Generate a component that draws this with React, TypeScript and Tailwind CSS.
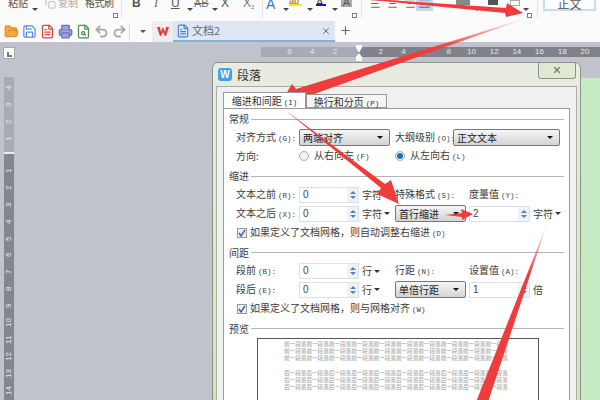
import React from 'react';
import { AlignCenter, AlignJustify, AlignLeft, AlignRight, Copy, FileSearch, FileText, FolderOpen, Plus, Printer, Redo2, Save, Undo2, X } from 'lucide-react';

const Caret = ({ className = 'border-t-[#444]' }: { className?: string }) => (
  <span className={`inline-block w-0 h-0 border-x-[3px] border-x-transparent border-t-[3px] ${className}`} />
);

const Launcher = ({ className = '' }: { className?: string }) => (
  <span className={`w-[5px] h-[5px] border border-[#6d7f99] bg-white shrink-0 mt-[13px] ${className}`} />
);

const Sep = ({ className = '' }: { className?: string }) => <span className={`w-px h-[18px] bg-[#e2e2e2] shrink-0 ${className}`} />;

const latin = "font-['Liberation_Sans',sans-serif]";

const RibbonRow = () => (
  <div className="h-[21px] flex items-start text-[10px] text-[#555] overflow-hidden shrink-0 leading-[12px] whitespace-nowrap">
    <span className="ml-[8px] w-[24px] -mt-[3px] shrink-0">粘贴</span>
    <span className="mt-[1px] shrink-0 w-[13px]"><Caret /></span>
    <Copy size={11} className="text-[#bbb] -mt-[2px] shrink-0" />
    <span className="ml-[2px] w-[27px] -mt-[3px] text-[#aaa] shrink-0">复制</span>
    <span className="w-[28px] -mt-[3px] shrink-0 overflow-visible tracking-[-0.5px]">格式刷</span>
    <Launcher />
    <Sep className="ml-[3px]" />
    <span className={`ml-[10px] w-[22px] -mt-[3px] text-[12px] font-bold text-[#555] shrink-0 ${latin}`}>B</span>
    <span className="w-[17px] -mt-[3px] text-[12px] italic text-[#666] shrink-0 font-['Liberation_Serif',serif]">I</span>
    <span className={`w-[16px] -mt-[3px] text-[12px] underline text-[#555] shrink-0 ${latin}`}>U</span>
    <span className="mt-[1px] w-[7px] shrink-0"><Caret /></span>
    <span className={`w-[18px] -mt-[3px] text-[11px] line-through decoration-[#e33] text-[#777] shrink-0 ${latin}`}>AB</span>
    <span className="mt-[1px] w-[9px] shrink-0"><Caret /></span>
    <span className={`w-[22px] -mt-[3px] text-[12px] text-[#555] shrink-0 ${latin}`}>X</span>
    <span className={`w-[19px] -mt-[3px] text-[12px] text-[#777] shrink-0 ${latin}`}>X<sub className="text-[6px]">2</sub></span>
    <Sep />
    <span className={`ml-[3px] w-[17px] -mt-[2px] text-[14px] text-[#3f74c8] shrink-0 ${latin}`}>A</span>
    <span className="mt-[1px] w-[6px] shrink-0"><Caret /></span>
    <span className="w-[18px] shrink-0"><span className={`block w-[13px] h-[6px] border-b-[2px] border-[#ffee00] text-[9px] text-[#a06000] leading-[3px] ${latin}`}>ab</span></span>
    <span className="mt-[1px] w-[9px] shrink-0"><Caret /></span>
    <span className="w-[16px] shrink-0"><span className={`block w-[10px] h-[6px] border-b-[2px] border-[#1111dd] text-[11px] leading-[4px] text-[#333] ${latin}`}>A</span></span>
    <span className="mt-[1px] w-[9px] shrink-0"><Caret /></span>
    <span className={`w-[11px] h-[7px] bg-[#aaa] text-[11px] leading-[5px] text-center text-[#555] shrink-0 ${latin}`}>A</span>
    <Launcher />
    <Sep className="ml-[4px]" />
    <AlignLeft size={13} className="ml-[8px] mr-[3px] -mt-[3px] text-[#666] shrink-0" />
    <AlignCenter size={13} className="mr-[4px] -mt-[3px] text-[#666] shrink-0" />
    <AlignRight size={13} className="-mt-[3px] text-[#666] shrink-0" />
    <span className="w-[17px] h-[11px] bg-[#c6d6ec] flex justify-center shrink-0"><AlignJustify size={13} className="-mt-[3px] text-[#666]" /></span>
    <span className="ml-[23px] w-[14px] h-[5px] bg-[#888] shrink-0" />
    <span className="ml-[4px] mt-[1px] w-[14px] shrink-0"><Caret /></span>
    <span className="w-[10px] h-[5px] bg-[#555] shrink-0" />
    <span className="ml-[3px] mt-[1px] w-[9px] shrink-0"><Caret /></span>
    <span className="w-[10px] h-[6px] border border-[#aaa] shrink-0" />
    <span className="ml-[3px] mt-[1px] w-[6px] shrink-0"><Caret /></span>
    <Launcher className="-ml-[2px]" />
    <Sep className="ml-[5px]" />
    <span className="ml-[5px] w-[53px] h-[12px] border-x-[2px] border-b-[2px] border-[#c8dcf0] text-center text-[12px] text-[#555] -mt-[1px] leading-[9px] shrink-0 bg-white">正文</span>
  </div>
);

const QuickRow = () => (
  <div className="h-[21px] flex items-stretch bg-[#fbfbfb] shrink-0">
    <div className="w-[152px] flex items-center pl-[4px] gap-[3px] shrink-0">
      <FolderOpen size={15} className="text-[#e98a27] fill-[#f5a742]" />
      <Save size={15} className="text-[#5b8fe0]" />
      <FileText size={15} className="text-[#d9453a]" />
      <Printer size={15} className="text-[#6c6fb5] fill-[#9fa2d3]" />
      <FileSearch size={15} className="text-[#558b55]" />
      <Undo2 size={15} className="text-[#aaa]" strokeWidth={3} />
      <Redo2 size={15} className="text-[#aaa]" strokeWidth={3} />
      <span className="w-px h-[18px] ml-[-1px] bg-[#ddd]" />
      <Caret className="ml-[7px] border-t-[#555]" />
    </div>
    <div className="w-[21px] bg-[#eeeeee] flex items-center justify-center text-[#e53a3a]">
      <svg width="14" height="11" viewBox="0 0 14 11"><path d="M1 1h3l1 5 2-5 2 5 1-5h3l-3 9H9L7 6l-2 4H4z" fill="currentColor" /></svg>
    </div>
    <div className="w-[162px] bg-[#dde6f2] border-b-[2px] border-[#88add8] flex items-center pl-[3px] text-[11px] text-[#666]">
      <FileText size={14} className="text-[#4a7fc8]" />
      <span className="ml-[2px] flex-1">文档2</span>
      <X size={10} className="mr-[4px] text-[#555]" />
    </div>
    <Plus size={13} className="ml-[4px] mt-[3px] text-[#666]" />
  </div>
);

const HRuler = () => (
  <div className={`h-[10px] ml-[261px] mt-[5px] flex text-[8px] leading-[10px] text-[#e8e8ee] text-center shrink-0 ${latin}`}>
    <div className="w-[97px] bg-[#a8aab5] flex justify-end pr-[11.7px]">
      {[6, 4, 2].map((n) => <span key={n} className="w-[22.7px]">{n}</span>)}
    </div>
    <div className="flex-1 bg-[#81818a] flex pl-[11.4px]">
      {[2, 4, 6, 8, 10, 12, 14, 16, 18, 20].map((n) => <span key={n} className="w-[22.7px] shrink-0">{n}</span>)}
    </div>
  </div>
);

const VNum = ({ n }: { n: number }) => (
  <span className="h-[16.9px] shrink-0 flex items-center justify-center [writing-mode:vertical-rl] rotate-180 leading-[10px]">{n}</span>
);

const VRuler = () => (
  <div className={`w-[10px] ml-[4px] text-[8px] text-[#e8e8ee] flex flex-col ${latin}`}>
    <div className="h-[77px] bg-[#a8aab5] flex flex-col items-center pt-[2px] border-b-[2px] border-[#eee] shrink-0">
      {[4, 3, 2, 1].map((n) => <VNum key={n} n={n} />)}
    </div>
    <div className="flex-1 bg-[#85858f] flex flex-col items-center pt-[8px]">
      {[1, 2, 3, 4, 5, 6, 7, 8, 9, 10, 11, 12, 13, 14].map((n) => <VNum key={n} n={n} />)}
    </div>
  </div>
);

// the dialog's hot keys are drawn half-width, wider apart than Noto's own latin
const Key = ({ k }: { k: string }) => (
  <span className="ml-[2px] text-[7.5px] font-['Liberation_Mono',monospace]">{k}</span>
);

const Section = ({ title, h }: { title: string; h: string }) => (
  <div className={`flex items-center pl-[5px] pr-[5px] ${h}`}>
    <span>{title}</span>
    <span className="flex-1 h-px bg-[#b4b4b4] ml-[2px]" />
  </div>
);

const Spin = ({ value, w = 'w-[60px]' }: { value: string; w?: string }) => (
  <div className={`h-[16px] border border-[#dbe0e8] flex items-stretch shrink-0 ${w}`}>
    <span className={`flex-1 pl-[3px] leading-[14px] text-[#444] ${latin}`}>{value}</span>
    <span className="w-[11px] bg-[#eef1f6] flex flex-col items-center justify-center gap-[2px]">
      <span className="w-0 h-0 border-x-[3px] border-x-transparent border-b-[3px] border-b-[#5b7fc0]" />
      <span className="w-0 h-0 border-x-[3px] border-x-transparent border-t-[3px] border-t-[#5b7fc0]" />
    </span>
  </div>
);

const Select = ({ value, w }: { value: string; w: string }) => (
  <div className={`h-[17px] border border-[#777] rounded-[2px] bg-linear-to-b from-[#f6f6f6] to-[#d4d4d4] flex items-center justify-between pl-[3px] pr-[6px] shrink-0 text-[#222] ${w}`}>
    <span>{value}</span>
    <Caret className="border-t-[#111]" />
  </div>
);

const Radio = ({ on }: { on?: boolean }) => (
  <span className="w-[10px] h-[10px] rounded-full border border-[#aaa] bg-[#f2f2f2] flex items-center justify-center shrink-0">
    {on && <span className="w-[6px] h-[6px] rounded-full bg-[#1f6fa8]" />}
  </span>
);

const Check = ({ label, k, h }: { label: string; k: string; h: string }) => (
  <div className={`flex items-center pl-[13px] ${h}`}>
    <span className="w-[10px] h-[10px] border border-[#999] bg-[#e8eef8] flex items-center justify-center shrink-0">
      <svg width="8" height="8" viewBox="0 0 8 8"><path d="M1 4l2 3 4-6" fill="none" stroke="#3f5fa8" strokeWidth="1.4" /></svg>
    </span>
    <span className="ml-[3px]">{label}<Key k={k} /></span>
  </div>
);

const Label = ({ text, k, w = 'w-[63px]' }: { text: string; k: string; w?: string }) => (
  <span className={`shrink-0 whitespace-nowrap ${w}`}>{text}<Key k={k} /></span>
);

const Unit = ({ text, caret }: { text: string; caret?: boolean }) => (
  <span className="ml-[3px] flex items-center gap-[2px] shrink-0 whitespace-nowrap">{text}{caret && <Caret className="border-t-[#333]" />}</span>
);

const previewLine = '前一段落前一段落前一段落前一段落前一段落前一段落前一段落前一段落前一段落前一段落';
const afterLine = '后一段落后一段落后一段落后一段落后一段落后一段落后一段落后一段落后一段落后一段落';

const Preview = () => (
  <div className="ml-[33px] w-[282px] h-[63px] border border-[#555] bg-white flex flex-col pl-[26px] pt-[2px] text-[5.6px] leading-[7px] text-[#999] overflow-hidden">
    <div className="whitespace-nowrap">{previewLine}</div>
    <div className="whitespace-nowrap">{previewLine}</div>
    <div className="whitespace-nowrap mb-[8px]">{previewLine}</div>
    <div className="whitespace-nowrap">{afterLine}</div>
    <div className="whitespace-nowrap">{afterLine}</div>
    <div className="whitespace-nowrap">{afterLine}</div>
  </div>
);

const Dialog = () => (
  <div className="absolute left-[212px] top-[62px] w-[369px] h-[345px] rounded-t-[6px] border border-[#8c948a] bg-linear-to-b from-[#e8ebe2] via-[#dcecc8] to-[#cfe8b0] flex flex-col px-[3px] text-[10px] leading-[14px] text-[#3c3c3c]">
    <div className="h-[23px] flex items-center pl-[2px] shrink-0">
      <span className={`w-[14px] h-[13px] rounded-[3px] bg-[#3ba3f2] text-white text-[10px] leading-[13px] text-center font-bold ${latin}`}>W</span>
      <span className="ml-[5px] text-[12px] text-[#333]">段落</span>
      <span className="ml-auto -mt-[8px] mr-[1px] w-[38px] h-[16px] border border-t-0 border-[#8c948a] rounded-b-[3px] bg-[#dfe8d2] flex items-center justify-center">
        <X size={10} strokeWidth={3} className="text-[#777]" />
      </span>
    </div>
    <div className="flex-1 bg-[#f0f0f0] border border-[#aab0a8] px-[6px] pt-[6px] flex flex-col">
      <div className="h-[15px] flex items-end shrink-0 relative z-10">
        <div className="w-[83px] h-[16px] bg-white border border-b-0 border-[#999] text-center text-[#333] leading-[16px]">缩进和间距<Key k="(I)" /></div>
        <div className="w-[81px] h-[14px] bg-[#f4f4f4] border border-[#999] text-center text-[#333] leading-[13px]">换行和分页<Key k="(P)" /></div>
      </div>
      <div className="flex-1 bg-white border border-[#9a9a9a]">
        <Section title="常规" h="h-[20px]" />
        <div className="flex items-center pl-[12px] h-[17px]">
          <Label text="对齐方式" k="(G):" />
          <Select value="两端对齐" w="w-[91px]" />
          <Label text="大纲级别" k="(O):" w="w-[58px] ml-[5px]" />
          <Select value="正文文本" w="w-[107px]" />
        </div>
        <div className="flex items-center pl-[12px] h-[20px]">
          <span className="w-[63px] shrink-0">方向:</span>
          <Radio />
          <span className="ml-[5px] w-[81px]">从右向左<Key k="(F)" /></span>
          <Radio on />
          <span className="ml-[5px]">从左向右<Key k="(L)" /></span>
        </div>
        <Section title="缩进" h="h-[20px]" />
        <div className="flex items-center pl-[12px] h-[18px]">
          <Label text="文本之前" k="(R):" />
          <Spin value="0" />
          <span className="w-[36px] shrink-0"><Unit text="字符" /></span>
          <Label text="特殊格式" k="(S):" w="w-[74px]" />
          <Label text="度量值" k="(Y):" />
        </div>
        <div className="flex items-center pl-[12px] h-[19px]">
          <Label text="文本之后" k="(X):" />
          <Spin value="0" />
          <span className="w-[36px] shrink-0"><Unit text="字符" caret /></span>
          <Select value="首行缩进" w="w-[71px]" />
          <span className="w-[3px] shrink-0" />
          <Spin value="2" w="w-[61px]" />
          <Unit text="字符" caret />
        </div>
        <Check label="如果定义了文档网格，则自动调整右缩进" k="(D)" h="h-[20px]" />
        <Section title="间距" h="h-[19px]" />
        <div className="flex items-center pl-[12px] h-[18px]">
          <Label text="段前" k="(B):" />
          <Spin value="0" />
          <span className="w-[36px] shrink-0"><Unit text="行" caret /></span>
          <Label text="行距" k="(N):" w="w-[74px]" />
          <Label text="设置值" k="(A):" />
        </div>
        <div className="flex items-center pl-[12px] h-[19px]">
          <Label text="段后" k="(E):" />
          <Spin value="0" />
          <span className="w-[36px] shrink-0"><Unit text="行" caret /></span>
          <Select value="单倍行距" w="w-[71px]" />
          <span className="w-[3px] shrink-0" />
          <Spin value="1" w="w-[61px]" />
          <Unit text="倍" />
        </div>
        <Check label="如果定义了文档网格，则与网格对齐" k="(W)" h="h-[20px]" />
        <Section title="预览" h="h-[19px]" />
        <Preview />
      </div>
    </div>
  </div>
);

const Arrows = () => (
  <svg className="absolute inset-0 pointer-events-none" width="600" height="400" viewBox="0 0 600 400">
    <defs>
      <linearGradient id="fadeLong" x1="527" y1="18" x2="430" y2="50" gradientUnits="userSpaceOnUse">
        <stop offset="0" stopColor="#f03c3c" stopOpacity="0.1" />
        <stop offset="1" stopColor="#f03c3c" />
      </linearGradient>
      <linearGradient id="fadeRight" x1="547" y1="224" x2="530" y2="275" gradientUnits="userSpaceOnUse">
        <stop offset="0" stopColor="#f03c3c" stopOpacity="0.1" />
        <stop offset="1" stopColor="#f03c3c" />
      </linearGradient>
    </defs>
    <polygon points="300,-6 506,8 507,3 523,13 506,17 505,13 330,-4" fill="#f03c3c" />
    <polygon points="527,18 296,89 292,84 284,97 301,108 300,99" fill="url(#fadeLong)" />
    <polygon points="285,110 385,184 391,180 399,204 377,194 381,188" fill="#f03c3c" />
    <polygon points="445,215 462,213 461,209 473,214 462,220 462,217" fill="#f03c3c" />
    <polygon points="547,224 488,402 476,402" fill="url(#fadeRight)" />
  </svg>
);

export default function App() {
  return (
    <div className="relative w-[600px] h-[400px] overflow-hidden bg-[#c0c2cc] flex flex-col font-['Noto_Sans_CJK_SC','Noto_Sans',sans-serif]">
      <div className="bg-[#fbfbfb] shrink-0">
        <RibbonRow />
        <QuickRow />
      </div>
      <HRuler />
      <div className="absolute left-[3px] top-[47px] w-[12px] h-[12px] bg-white border border-[#aaa] flex items-end justify-center pb-[1px]">
        <span className="w-[5px] h-[5px] border-l-2 border-b-2 border-[#777]" />
      </div>
      <div className="absolute left-[356px] top-[45px] w-[6px] h-[16px] bg-white [clip-path:polygon(0_0,100%_0,100%_15%,50%_50%,100%_75%,100%_100%,0_100%,0_75%,50%_50%,0_15%)]" />
      <div className="absolute left-[581px] top-[78px] right-0 bottom-0 bg-[#c7ebc5]" />
      <div className="flex-1 flex pt-[20px] min-h-0 overflow-hidden">
        <VRuler />
      </div>
      <Dialog />
      <Arrows />
    </div>
  );
}
